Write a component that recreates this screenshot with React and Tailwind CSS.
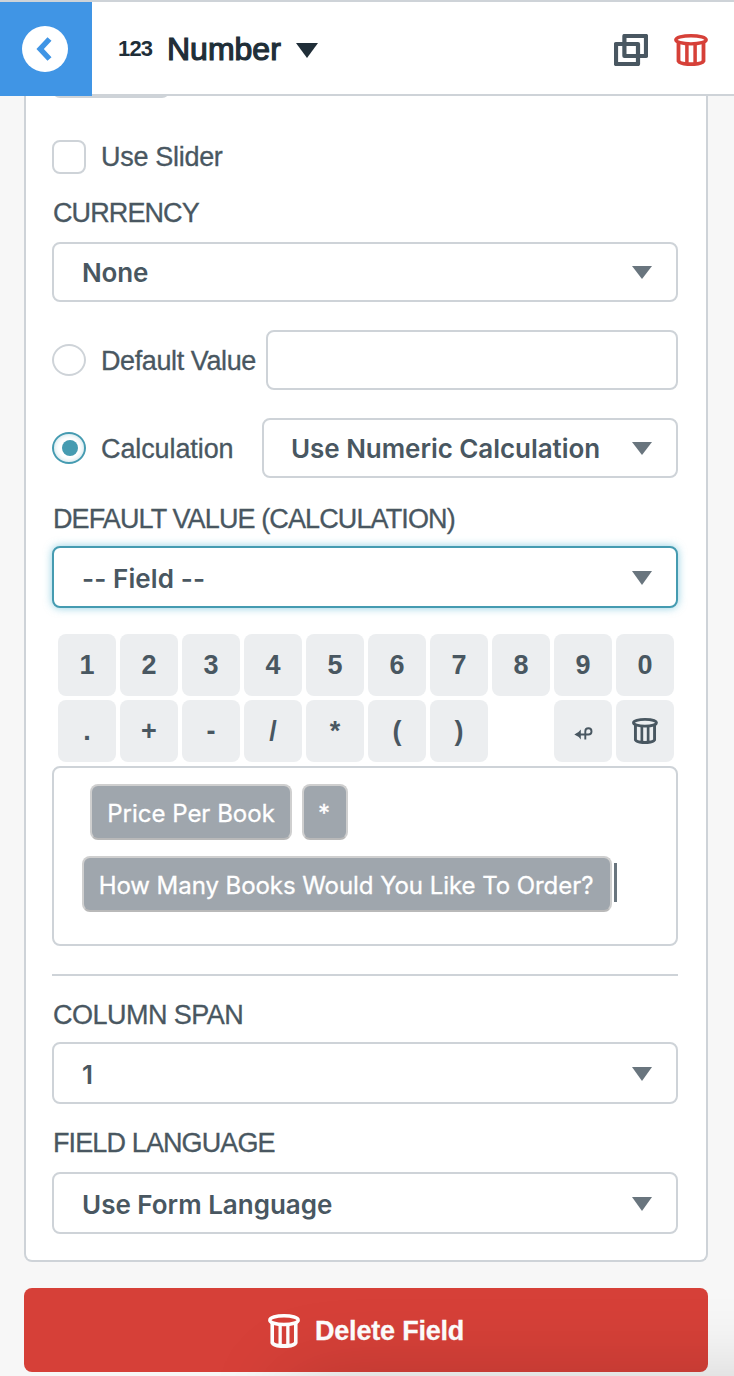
import React from 'react';
import clsx from 'clsx';

const digits = ['1', '2', '3', '4', '5', '6', '7', '8', '9', '0'];
const operators = ['.', '+', '-', '/', '*', '(', ')'];

const TrashIcon = ({ className }) => (
  <svg className={className} viewBox="0 0 34 32" preserveAspectRatio="none" fill="none" stroke="currentColor">
    <ellipse cx="17" cy="5.8" rx="15.2" ry="4.1" strokeWidth="3.4" />
    <path d="M4.5 8v19q1.5 3.2 12.5 3.2t12.5-3.2V8" strokeWidth="3.8" />
    <path d="M12.9 10v20M21.1 10v20" strokeWidth="3.5" />
  </svg>
);

const DuplicateIcon = () => (
  <svg className="h-8 w-[34px]" viewBox="0 0 34 32" fill="none" stroke="#495761" strokeWidth="4.2" strokeLinejoin="round">
    <rect x="10.4" y="2" width="21.6" height="20" />
    <rect x="2" y="10" width="22" height="20" />
  </svg>
);

const UndoIcon = () => (
  <svg className="mt-1 h-[13px] w-[19px]" viewBox="0 0 19 13" fill="none" stroke="currentColor" strokeWidth="1.9">
    <path d="M0.3 7.6Q4.8 5.8 6.8 2.6V12.6Q4.8 9.4 0.3 7.6Z" fill="currentColor" stroke="none" />
    <path d="M4 7.5h10.4a3.1 3.1 0 1 0-3.1-3.1v8.2" />
  </svg>
);

const Caret = ({ className }) => (
  <svg className={clsx('shrink-0', className)} viewBox="0 0 20 12" preserveAspectRatio="none" fill="currentColor">
    <path d="M0 0h20L10 12z" />
  </svg>
);

const Select = ({ value, focused, tall, className }) => (
  <button
    className={clsx(
      'flex items-center justify-between rounded-lg border-2 bg-white pr-6',
      "font-['Inter',sans-serif] text-[26px] font-semibold text-[#495761]",
      focused ? 'border-[#459bb1] shadow-[0_0_8px_rgba(69,175,205,0.6)]' : 'border-[#ced3d8]',
      tall ? 'h-[62px]' : 'h-[60px]',
      className
    )}
  >
    <span className={clsx('whitespace-nowrap', tall && 'pt-[3px]')}>{value}</span>
    <Caret className={clsx('w-5 text-[#69757e]', tall ? 'mt-0.5 h-3.5' : 'mt-px h-[13px]')} />
  </button>
);

const Label = ({ children, className }) => (
  <div className={clsx('pl-px text-[27px] uppercase leading-[30px] [-webkit-text-stroke:0.3px_#495761]', className)}>
    {children}
  </div>
);

const Radio = ({ checked }) => (
  <span
    className={clsx(
      'flex h-8 w-[34px] shrink-0 items-center justify-center rounded-[50%] border-2',
      checked ? 'border-[#459bb1] shadow-[inset_0_0_5px_rgba(69,155,177,0.35)]' : 'border-[#ced3d8]'
    )}
  >
    {checked && <span className="ml-px h-4 w-4 rounded-full bg-[#459bb1]"></span>}
  </span>
);

const Key = ({ children }) => (
  <button className="flex h-[62px] w-[58px] items-center justify-center rounded-lg bg-[#eceef0] text-[27px] font-bold">
    {children}
  </button>
);

const Token = ({ children, className }) => (
  <span
    className={clsx(
      'flex h-14 items-center justify-center whitespace-nowrap rounded-lg border-2 border-[#cfcfcf] border-b-[#b9b9b9] bg-[#9fa6ad] pt-1 text-white [-webkit-text-stroke:0.3px_white]',
      className
    )}
  >
    {children}
  </span>
);

const App = () => {
  return (
    <div className="relative flex h-[1376px] w-[734px] flex-col overflow-hidden bg-[#f7f7f7] font-['Liberation_Sans',sans-serif] text-[#495761]">
      {/* Header */}
      <header className="flex h-24 shrink-0 border-t-2 border-[#ced3d8] bg-white">
        <button className="flex w-[92px] items-center justify-center bg-[#4095e5] pr-0.5">
          <span className="flex h-[46px] w-[46px] items-center justify-center rounded-full bg-white pr-[3px]">
            <svg className="h-6 w-4" viewBox="0 0 16 24" fill="none" stroke="#4095e5" strokeWidth="5.5">
              <path d="M13.5 2 4.2 12l9.3 10" />
            </svg>
          </span>
        </button>
        <div className="flex flex-1 items-center border-b-2 border-[#ced3d8] pl-[26px] pr-[26px] text-[#202e38]">
          <span className="w-[49px] pt-px text-[22px] font-bold leading-6 tracking-[-0.8px]">123</span>
          <span className="pt-0.5 text-[32px] leading-9 [-webkit-text-stroke:1.2px_#202e38]">Number</span>
          <Caret className="ml-[15px] mt-1 h-[15px] w-[22px]" />
          <div className="ml-auto flex gap-[26px] pt-1">
            <DuplicateIcon />
            <TrashIcon className="h-8 w-[34px] text-[#d64038]" />
          </div>
        </div>
      </header>

      {/* Settings card */}
      <section className="ml-6 flex h-[1166px] w-[684px] shrink-0 flex-col rounded-b-lg border-2 border-t-0 border-[#ced3d8] bg-white px-[26px]">
        <div className="flex h-0.5 items-end overflow-hidden">
          <div className="h-[60px] w-[118px] rounded-lg border-2 border-[#ced3d8]"></div>
        </div>

        <label className="mt-[42px] flex h-[34px] items-center text-[27px] tracking-[-0.3px] [-webkit-text-stroke:0.3px_#495761]">
          <span className="mr-[15px] h-[34px] w-[34px] rounded-lg border-2 border-[#ced3d8]"></span>
          Use Slider
        </label>

        <Label className="mt-6 tracking-[-0.9px]">Currency</Label>
        <Select value="None" className="mt-3.5 w-[626px] pl-7 tracking-[-0.2px]" />

        <div className="mt-7 flex h-[60px] w-[626px] items-center text-[27px] [-webkit-text-stroke:0.3px_#495761]">
          <Radio />
          <span className="ml-[15px] flex-1 whitespace-nowrap pt-0.5 tracking-[-0.4px]">Default Value</span>
          <input className="h-[60px] w-[412px] rounded-lg border-2 border-[#ced3d8]" />
        </div>

        <div className="mt-7 flex h-[60px] w-[626px] items-center text-[27px]">
          <Radio checked />
          <span className="ml-[15px] flex-1 pt-0.5 tracking-[-0.1px] [-webkit-text-stroke:0.3px_#495761]">Calculation</span>
          <Select value="Use Numeric Calculation" className="w-[416px] pl-[27px] tracking-[-0.05px]" />
        </div>

        <Label className="mt-[26px] tracking-[-0.88px]">Default Value (Calculation)</Label>
        <Select value="-- Field --" focused tall className="mt-3 w-[626px] pl-7 tracking-[0.1px]" />

        {/* Formula keypad */}
        <div className="ml-1.5 mt-[26px] grid grid-cols-[repeat(10,58px)] gap-1">
          {digits.map((digit) => (
            <Key key={digit}>{digit}</Key>
          ))}
          {operators.map((operator) => (
            <Key key={operator}>{operator}</Key>
          ))}
          <span></span>
          <Key>
            <UndoIcon />
          </Key>
          <Key>
            <TrashIcon className="h-[26px] w-[26px]" />
          </Key>
        </div>

        {/* Formula */}
        <div className="mt-1 flex h-[180px] w-[626px] flex-col gap-4 rounded-lg border-2 border-[#ced3d8] pl-7 pt-4 font-['Inter',sans-serif] text-2xl">
          <div className="flex gap-2.5 pl-2">
            <Token className="w-[202px]">Price Per Book</Token>
            <Token className="w-[46px] pr-0.5">*</Token>
          </div>
          <div className="flex">
            <Token className="w-[530px] pr-0.5 tracking-[-0.06px]">How Many Books Would You Like To Order?</Token>
            <span className="ml-0.5 mt-[7px] h-[39px] w-[3px] bg-[#69757e]"></span>
          </div>
        </div>

        <hr className="mt-7 w-[626px] border-t-2 border-[#ced3d8]" />

        <Label className="mt-6 tracking-[-0.52px]">Column Span</Label>
        <Select value="1" tall className="mt-3 w-[626px] pl-7" />
        <Label className="mt-6 tracking-[-0.88px]">Field Language</Label>
        <Select value="Use Form Language" tall className="mt-3.5 w-[626px] pl-7" />
      </section>

      <button className="ml-6 mt-[26px] flex h-[84px] w-[684px] shrink-0 items-center rounded-lg bg-[#d64038] pl-[244px] text-[27px] font-bold text-white">
        <TrashIcon className="mt-0.5 h-[34px] w-8" />
        <span className="ml-[15px] pt-0.5 tracking-[-0.2px] [-webkit-text-stroke:0.3px_white]">Delete Field</span>
      </button>

      {/* Shadow of the chat window below the fold */}
      <div className="pointer-events-none absolute left-[290px] top-[1380px] h-40 w-[600px] shadow-[0_0_84px_rgba(0,0,0,0.17)]"></div>
    </div>
  );
};

export default App;
